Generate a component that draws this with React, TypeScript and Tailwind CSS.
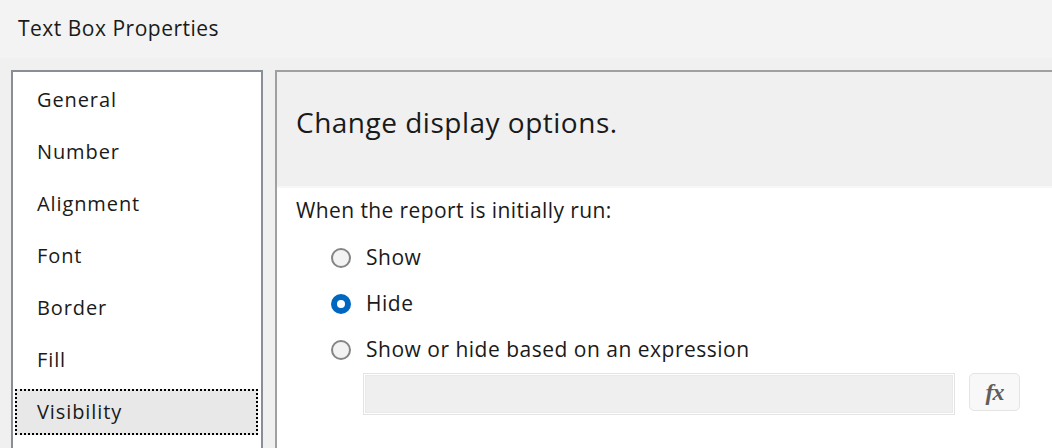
import React, { useState } from "react";

const tabs = ["General", "Number", "Alignment", "Font", "Border", "Fill", "Visibility"];

const options = [
  { id: "show", label: "Show" },
  { id: "hide", label: "Hide" },
  { id: "expr", label: "Show or hide based on an expression" },
];

function Radio({ checked }: { checked: boolean }) {
  if (checked) {
    return (
      <span className="w-[20px] h-[20px] rounded-full bg-[#0067c0] flex items-center justify-center">
        <span className="w-[8px] h-[8px] rounded-full bg-white" />
      </span>
    );
  }
  return <span className="w-[20px] h-[20px] rounded-full border-2 border-[#858585] bg-[#f3f3f3]" />;
}

export default function App() {
  const [active, setActive] = useState("Visibility");
  const [choice, setChoice] = useState("hide");

  return (
    <div
      className="w-[1052px] h-[448px] overflow-hidden bg-[#f0f0f0] text-[#1a1a1a] flex flex-col"
      style={{ fontFamily: '"Open Sans", "Noto Sans", sans-serif' }}
    >
      <div className="h-[58px] shrink-0 bg-[#f3f3f3] pl-[18px] flex items-center text-[21px] tracking-[0.5px]">
        Text Box Properties
      </div>

      <div className="flex-1 flex gap-[12px] pt-[12px] pl-[11px] min-h-0">
        {/* left tab list */}
        <div className="w-[252px] shrink-0 bg-white border-2 border-b-0 border-[#898d95] pt-[2px]">
          {tabs.map((t) => (
            <div key={t} className="h-[52px] py-[3px] pl-[2px] pr-[3px]" onClick={() => setActive(t)}>
              <div
                className={`h-full flex items-center pl-[20px] text-[20px] tracking-[0.9px] border-2 border-dotted ${
                  active === t ? "bg-[#e8e8e8] border-black" : "border-transparent"
                }`}
              >
                {t}
              </div>
            </div>
          ))}
        </div>

        {/* right content */}
        <div className="flex-1 border-l-2 border-t-2 border-[#a0a0a0] flex flex-col min-w-0">
          <div className="h-[114px] shrink-0 bg-[#f0f0f0] pl-[19px] flex items-center pb-[14px] text-[28px] tracking-[0.5px]">
            Change display options.
          </div>
          <div className="h-[2px] bg-[#f7f7f7]" />
          <div className="flex-1 bg-white pl-[19px] pt-[9px]">
            <div className="text-[21px] tracking-[0.4px] h-[28px] flex items-center">When the report is initially run:</div>
            <div className="pl-[35px] pt-[10px] flex flex-col">
              {options.map((o) => (
                <div
                  key={o.id}
                  className="h-[46px] flex items-center gap-[15px] text-[21px] tracking-[0.5px]"
                  onClick={() => setChoice(o.id)}
                >
                  <Radio checked={choice === o.id} />
                  <span>{o.label}</span>
                </div>
              ))}
            </div>
            <div className="flex items-start gap-[14px] pl-[67px]">
              <div className="w-[592px] h-[42px] border border-[#e3e3e3] bg-white p-px">
                <div className="h-full border border-[#e9e9e9] bg-[#efefef]" />
              </div>
              <button className="w-[51px] h-[38px] rounded-[5px] border border-[#e4e4e4] bg-[#f8f8f8] flex items-center justify-center">
                <span
                  className="italic font-bold text-[24px] leading-none text-[#5f5f5f] tracking-[-1px]"
                  style={{ fontFamily: '"Liberation Serif", serif' }}
                >
                  fx
                </span>
              </button>
            </div>
          </div>
        </div>
      </div>
    </div>
  );
}
